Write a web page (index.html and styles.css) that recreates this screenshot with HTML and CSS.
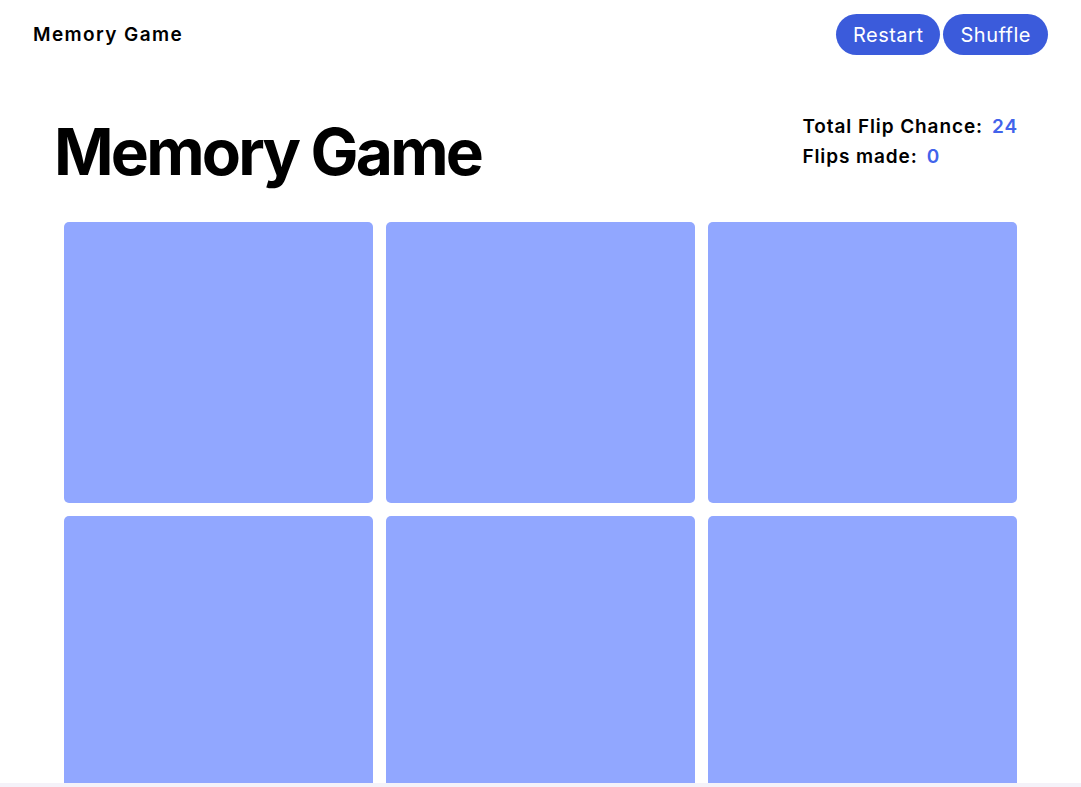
FILE: index.html
```html
<!DOCTYPE html>
<html lang="en">
<head>
<meta charset="utf-8">
<title>Memory Game</title>
<link rel="stylesheet" href="styles.css">
</head>
<body>
<header class="topbar">
  <div class="brand">Memory Game</div>
  <nav class="actions">
    <button class="btn">Restart</button>
    <button class="btn">Shuffle</button>
  </nav>
</header>
<main class="page">
  <section class="intro">
    <h1 class="title">Memory Game</h1>
    <div class="stats">
      <div class="stat"><span class="label">Total Flip Chance:</span><span class="value">24</span></div>
      <div class="stat"><span class="label">Flips made:</span><span class="value">0</span></div>
    </div>
  </section>
  <section class="board">
    <div class="card"></div>
    <div class="card"></div>
    <div class="card"></div>
    <div class="card"></div>
    <div class="card"></div>
    <div class="card"></div>
  </section>
</main>
<div class="scrolltrack"></div>
</body>
</html>
```

FILE: styles.css
```css
* { box-sizing: border-box; }
html, body { margin: 0; padding: 0; }
body {
  font-family: "Inter", "Open Sans", sans-serif;
  color: #000;
  background: #fff;
}
.topbar {
  display: flex;
  justify-content: space-between;
  align-items: center;
  height: 69px;
  padding: 0 33px;
}
.brand {
  font-size: 19px;
  font-weight: 600;
  letter-spacing: 1.4px;
}
.actions {
  display: flex;
  gap: 3px;
}
.btn {
  font-family: inherit;
  font-size: 20px;
  font-weight: 400;
  letter-spacing: 0.5px;
  color: #fff;
  background: #3b5bdb;
  border: none;
  border-radius: 21px;
  height: 41px;
  padding: 0 17px;
  cursor: pointer;
}
.page {
  padding: 0 64px;
}
.intro {
  display: flex;
  justify-content: space-between;
  align-items: flex-start;
  margin: 0 -1px 0 -10px;
  height: 153px;
}
.title {
  margin: 51px 0 0 0;
  font-size: 64px;
  font-weight: 700;
  letter-spacing: -2.8px;
  line-height: 1;
}
.stats {
  margin-top: 43px;
  display: flex;
  flex-direction: column;
}
.stat {
  font-size: 19px;
  font-weight: 600;
  letter-spacing: 0.9px;
  line-height: 30px;
  display: flex;
  gap: 9px;
}
.value {
  color: #4263eb;
}
.board {
  display: grid;
  grid-template-columns: repeat(3, 309px);
  grid-auto-rows: 281px;
  gap: 13px;
}
.card {
  background: #91a7ff;
  border-radius: 5px;
}
.scrolltrack {
  position: fixed;
  left: 0;
  right: 0;
  bottom: 0;
  height: 4px;
  background: #f4f2f9;
}
```
